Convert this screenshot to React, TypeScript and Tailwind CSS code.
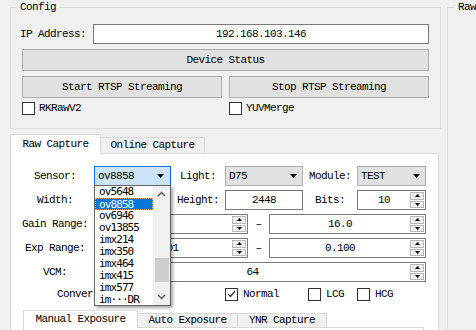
import React from "react";

const sensors = [
  "ov5648",
  "ov8858",
  "ov6946",
  "ov13855",
  "imx214",
  "imx350",
  "imx464",
  "imx415",
  "imx577",
  "im···DR",
];

const DownArrow = () => (
  <svg width="7" height="4" viewBox="0 0 7 4">
    <path d="M0 0h7L3.5 4z" fill="#000" />
  </svg>
);

const Check = ({ checked }: { checked?: boolean }) => (
  <span className="w-[13px] h-[13px] shrink-0 border border-[#333333] bg-white flex items-center justify-center">
    {checked && (
      <svg width="9" height="8" viewBox="0 0 9 8">
        <path d="M1 4l2.5 2.5L8 1" stroke="#333" strokeWidth="1.2" fill="none" />
      </svg>
    )}
  </span>
);

const Combo = ({ text, className }: { text: string; className: string }) => (
  <div
    className={`h-[20px] border border-[#adadad] bg-[#e1e1e1] flex items-center justify-between pl-[3px] pr-[5px] ${className}`}
  >
    <span>{text}</span>
    <DownArrow />
  </div>
);

const Input = ({ text, className }: { text: string; className: string }) => (
  <div
    className={`h-[20px] border border-[#7a7a7a] bg-white flex items-center justify-center ${className}`}
  >
    {text}
  </div>
);

const SpinBox = ({ text, className }: { text: string; className: string }) => (
  <div className={`h-[20px] border border-[#7a7a7a] bg-white flex ${className}`}>
    <span className="flex-1 flex items-center justify-center">{text}</span>
    <div className="w-[15px] h-full py-[1px] pr-[1px] flex flex-col gap-[1px]">
      <span className="flex-1 bg-[#f0f0f0] border border-[#b9b9b9] flex items-center justify-center">
        <svg width="5" height="3" viewBox="0 0 5 3">
          <path d="M0 3h5L2.5 0z" fill="#000" />
        </svg>
      </span>
      <span className="flex-1 bg-[#f0f0f0] border border-[#b9b9b9] flex items-center justify-center">
        <svg width="5" height="3" viewBox="0 0 5 3">
          <path d="M0 0h5L2.5 3z" fill="#000" />
        </svg>
      </span>
    </div>
  </div>
);

const Label = ({ text, className }: { text: string; className: string }) => (
  <span className={`shrink-0 text-center ${className}`}>{text}</span>
);

export default function App() {
  return (
    <div className="relative w-[476px] h-[330px] overflow-hidden bg-[#f0f0f0] flex text-black font-['Liberation_Mono',monospace] text-[11px] tracking-[-0.6px] leading-[13px]">
      {/* left column */}
      <div className="ml-[10px] w-[431px] shrink-0 flex flex-col">
        <fieldset className="mt-[1px] border border-[#dcdcdc] pl-[9px] pr-[11px] pt-[11px] pb-[13px]">
          <legend className="ml-[-3px] px-[3px] leading-[12px]">Config</legend>
          <div className="flex items-center h-[20px]">
            <span className="w-[73px] shrink-0">IP Address:</span>
            <Input text="192.168.103.146" className="flex-1" />
          </div>
          <div className="ml-[2px] mt-[5px] h-[22px] border border-[#adadad] bg-[#e1e1e1] flex items-center justify-center">
            Device Status
          </div>
          <div className="ml-[2px] mt-[5px] flex gap-[7px]">
            <div className="flex-1 h-[22px] border border-[#adadad] bg-[#e1e1e1] flex items-center justify-center">
              Start RTSP Streaming
            </div>
            <div className="flex-1 h-[22px] border border-[#adadad] bg-[#e1e1e1] flex items-center justify-center">
              Stop RTSP Streaming
            </div>
          </div>
          <div className="ml-[2px] mt-[4px] flex h-[13px]">
            <div className="w-[207px] flex items-center gap-[4px]">
              <Check />
              <span>RKRawV2</span>
            </div>
            <div className="flex items-center gap-[4px]">
              <Check />
              <span>YUVMerge</span>
            </div>
          </div>
        </fieldset>

        {/* tab widget */}
        <div className="mt-[5px] w-[429px] flex flex-col">
          <div className="flex items-end h-[19px]">
            <div className="relative z-10 mb-[-1px] w-[91px] h-[20px] bg-white border border-b-0 border-[#d9d9d9] flex items-center justify-center">
              Raw Capture
            </div>
            <div className="w-[104px] h-[16px] bg-[#f0f0f0] border border-b-0 border-l-0 border-[#d9d9d9] flex items-center justify-center">
              Online Capture
            </div>
          </div>
          <div className="h-[200px] bg-white border border-[#d9d9d9] pt-[12px] pl-[5px]">
            <div className="flex flex-col gap-[4px]">
              <div className="flex items-center h-[20px]">
                <Label text="Sensor:" className="w-[78px]" />
                <div className="w-[77px] h-[20px] border border-[#0078d7] bg-[#cce4f7] flex items-center justify-between pl-[3px] pr-[6px]">
                  <span>ov8858</span>
                  <DownArrow />
                </div>
                <Label text="Light:" className="w-[54px]" />
                <Combo text="D75" className="w-[78px]" />
                <Label text="Module:" className="w-[54px]" />
                <Combo text="TEST" className="w-[69px]" />
              </div>
              <div className="flex items-center h-[20px]">
                <Label text="Width:" className="w-[78px]" />
                <Input text="3264" className="w-[77px]" />
                <Label text="Height:" className="w-[54px]" />
                <Input text="2448" className="w-[78px]" />
                <Label text="Bits:" className="w-[54px]" />
                <SpinBox text="10" className="w-[69px]" />
              </div>
              <div className="flex items-center h-[20px]">
                <Label text="Gain Range:" className="w-[78px]" />
                <SpinBox text="1" className="w-[154px]" />
                <Label text="–" className="w-[21px]" />
                <SpinBox text="16.0" className="w-[157px]" />
              </div>
              <div className="flex items-center h-[20px]">
                <Label text="Exp Range:" className="w-[78px]" />
                <SpinBox text="0.001" className="w-[154px]" />
                <Label text="–" className="w-[21px]" />
                <SpinBox text="0.100" className="w-[157px]" />
              </div>
              <div className="flex items-center h-[20px]">
                <Label text="VCM:" className="w-[78px]" />
                <SpinBox text="64" className="w-[332px]" />
              </div>
              <div className="mt-[1px] flex items-center h-[14px]">
                <span className="ml-[41px] w-[168px] shrink-0">Conversion CG Mode:</span>
                <div className="w-[83px] flex items-center gap-[5px]">
                  <Check checked />
                  <span>Normal</span>
                </div>
                <div className="w-[49px] flex items-center gap-[5px]">
                  <Check />
                  <span>LCG</span>
                </div>
                <div className="flex items-center gap-[5px]">
                  <Check />
                  <span>HCG</span>
                </div>
              </div>
            </div>

            {/* inner tabs */}
            <div className="mt-[9px] ml-[7px] w-[401px] flex flex-col">
              <div className="flex items-end h-[17px]">
                <div className="relative z-10 mb-[-1px] w-[115px] h-[18px] bg-white border border-b-0 border-[#d9d9d9] flex items-center justify-center">
                  Manual Exposure
                </div>
                <div className="w-[100px] h-[14px] bg-[#f0f0f0] border border-b-0 border-l-0 border-[#d9d9d9] flex items-center justify-center">
                  Auto Exposure
                </div>
                <div className="w-[89px] h-[14px] bg-[#f0f0f0] border border-b-0 border-l-0 border-[#d9d9d9] flex items-center justify-center">
                  YNR Capture
                </div>
              </div>
              <div className="h-[40px] border border-[#d9d9d9] bg-white" />
            </div>
          </div>
        </div>
      </div>

      {/* right group */}
      <fieldset className="ml-[6px] mt-[1px] w-[200px] shrink-0 h-[400px] border border-[#dcdcdc] pl-[10px]">
        <legend className="ml-[-3px] px-[3px] leading-[12px]">Raw</legend>
      </fieldset>

      {/* open sensor popup */}
      <div className="absolute left-[94px] top-[185px] w-[77px] h-[121px] bg-white border border-[#646464] flex shadow-[2px_2px_3px_rgba(0,0,0,0.35)] font-['DejaVu_Sans_Mono',monospace] text-[11px] tracking-[-0.9px]">
        <div className="flex-1 flex flex-col">
          {sensors.map((s) => (
            <div
              key={s}
              className={
                s === "ov8858"
                  ? "h-[12px] leading-[11px] pl-[3px] bg-[#0078d7] text-white border border-dotted border-[#f7a24a]"
                  : "h-[12px] leading-[12px] pl-[4px]"
              }
            >
              {s}
            </div>
          ))}
        </div>
        <div className="w-[17px] bg-[#f0f0f0] flex flex-col items-center">
          <svg className="mt-[5px]" width="9" height="6" viewBox="0 0 9 6">
            <path d="M1 5l3.5-3.5L8 5" stroke="#606060" strokeWidth="1.5" fill="none" />
          </svg>
          <div className="mt-[61px] w-[14px] h-[24px] bg-[#cdcdcd]" />
          <svg className="mt-[12px]" width="9" height="6" viewBox="0 0 9 6">
            <path d="M1 1l3.5 3.5L8 1" stroke="#606060" strokeWidth="1.5" fill="none" />
          </svg>
        </div>
      </div>
    </div>
  );
}
